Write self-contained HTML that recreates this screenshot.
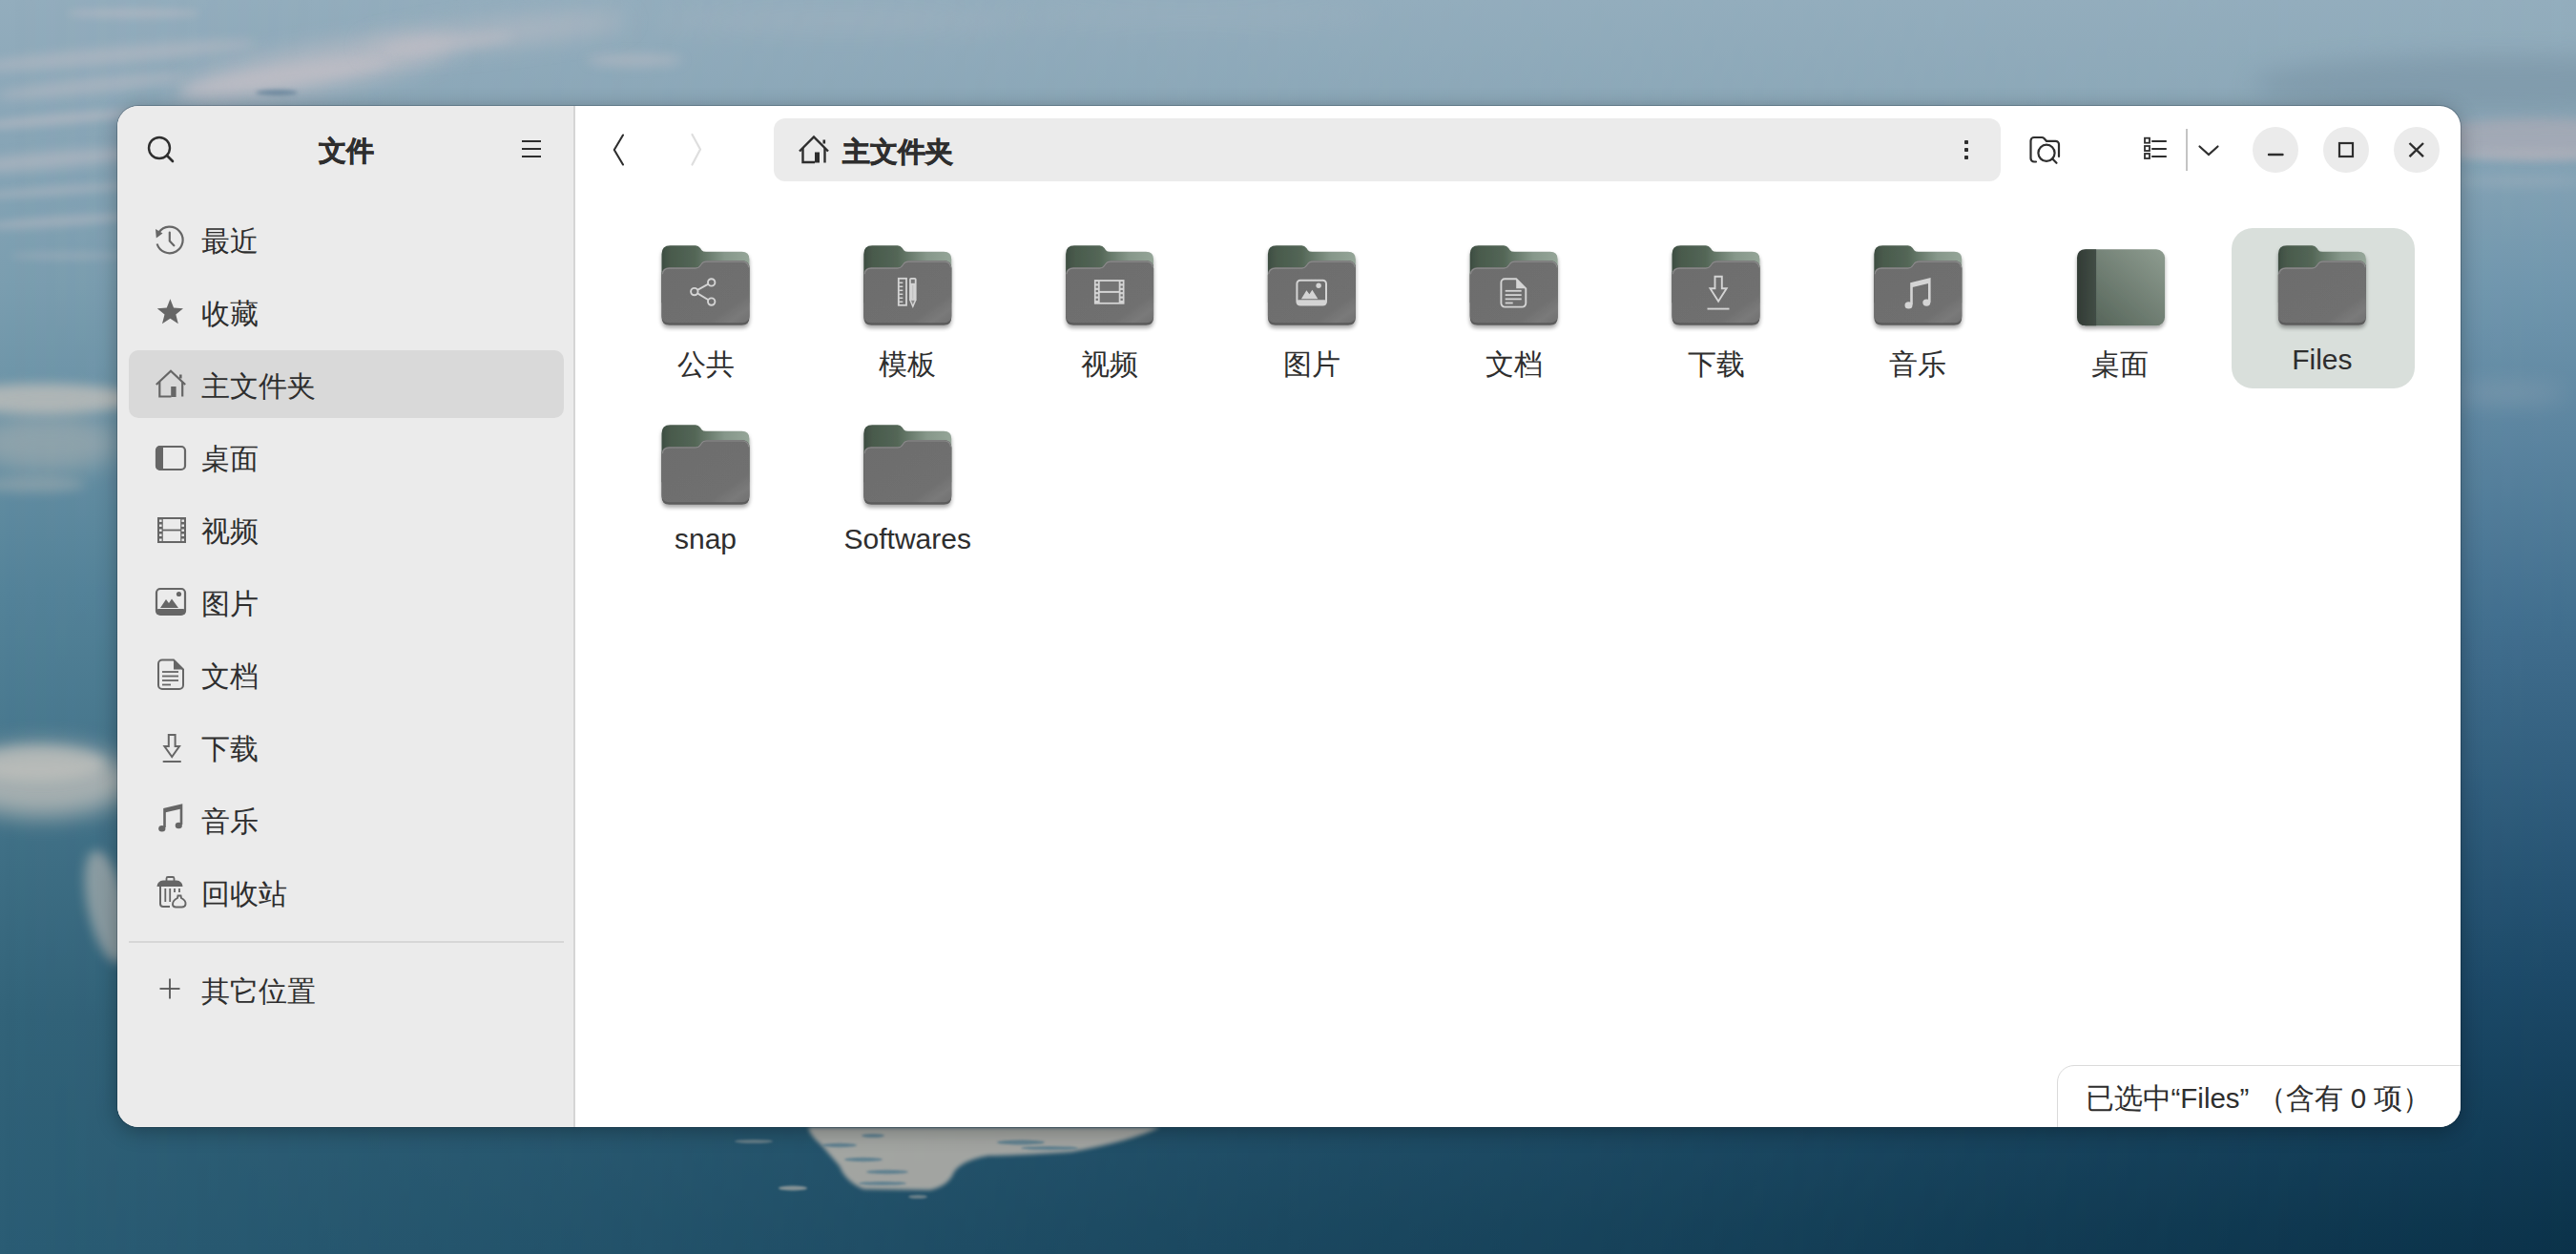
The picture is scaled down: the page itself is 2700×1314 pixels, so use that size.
<!DOCTYPE html>
<html><head><meta charset="utf-8">
<style>
html,body{margin:0;padding:0;}
body{width:2700px;height:1314px;position:relative;overflow:hidden;font-family:"Liberation Sans",sans-serif;color:#2e2e2e;background:#3f7a98;}
.abs{position:absolute;}
#win{position:absolute;left:123px;top:111px;width:2456px;height:1070px;border-radius:22px;overflow:hidden;background:#fff;
 box-shadow:0 0 0 1px rgba(0,20,35,0.22),0 4px 22px rgba(0,0,0,0.3);}
#side{position:absolute;left:0;top:0;width:478px;height:1070px;background:#ebebeb;}
#sep{position:absolute;left:478px;top:0;width:2px;height:1070px;background:#d5d5d5;}
.t{position:absolute;font-size:30px;line-height:40px;white-space:nowrap;color:#2e2e2e;}
.b{font-weight:bold;-webkit-text-stroke:0.6px #2e2e2e;}
svg{position:absolute;overflow:visible;}
</style></head>
<body>
<svg class="abs" style="left:0;top:0" width="2700" height="1314" viewBox="0 0 2700 1314">
<defs>
 <linearGradient id="bgv" x1="0" y1="0" x2="0" y2="1">
  <stop offset="0" stop-color="#93adbd"/><stop offset="0.085" stop-color="#8ba7b8"/><stop offset="0.23" stop-color="#7a9daf"/>
  <stop offset="0.47" stop-color="#548399"/><stop offset="0.81" stop-color="#326379"/><stop offset="1" stop-color="#2a5c74"/>
 </linearGradient>
 <linearGradient id="bgr" x1="0" y1="0" x2="0" y2="1">
  <stop offset="0" stop-color="#93adbd"/><stop offset="0.085" stop-color="#8ca8b8"/><stop offset="0.23" stop-color="#7096ad"/>
  <stop offset="0.49" stop-color="#426f8f"/><stop offset="0.78" stop-color="#1c4968"/><stop offset="0.975" stop-color="#0c344c"/><stop offset="1" stop-color="#0b324a"/>
 </linearGradient>
 <linearGradient id="mh" x1="0" y1="0" x2="1" y2="0">
  <stop offset="0" stop-color="#fff" stop-opacity="0"/><stop offset="1" stop-color="#fff" stop-opacity="1"/>
 </linearGradient>
 <mask id="mhm" maskUnits="userSpaceOnUse" x="0" y="0" width="2700" height="1314"><rect width="2700" height="1314" fill="url(#mh)"/></mask>
 <filter id="bl12" x="-50%" y="-300%" width="200%" height="700%"><feGaussianBlur stdDeviation="12"/></filter><filter id="bl6" x="-50%" y="-300%" width="200%" height="700%"><feGaussianBlur stdDeviation="6"/></filter>
 <filter id="bl4" x="-50%" y="-200%" width="200%" height="500%"><feGaussianBlur stdDeviation="4"/></filter>
 <filter id="bl1" x="-50%" y="-300%" width="200%" height="700%"><feGaussianBlur stdDeviation="1"/></filter><filter id="bl2" x="-50%" y="-200%" width="200%" height="500%"><feGaussianBlur stdDeviation="2"/></filter>
</defs>
<rect width="2700" height="1314" fill="url(#bgv)"/>
<rect width="2700" height="1314" fill="url(#bgr)" mask="url(#mhm)"/>
<g fill="#c3bfc6">
 <ellipse cx="330" cy="72" rx="150" ry="22" transform="rotate(-10 330 72)" opacity="0.7" filter="url(#bl12)"/>
 <ellipse cx="300" cy="80" rx="110" ry="10" transform="rotate(-8 300 80)" opacity="0.55" filter="url(#bl6)"/>
 <ellipse cx="520" cy="35" rx="140" ry="13" transform="rotate(-6 520 35)" opacity="0.55" filter="url(#bl12)"/>
 <ellipse cx="470" cy="45" rx="70" ry="7" transform="rotate(-6 470 45)" opacity="0.45" filter="url(#bl6)"/>
 <ellipse cx="120" cy="58" rx="150" ry="9" transform="rotate(-5 120 58)" opacity="0.45" filter="url(#bl6)"/>
 <ellipse cx="95" cy="90" rx="100" ry="8" transform="rotate(-6 95 90)" opacity="0.45" filter="url(#bl6)"/>
 <ellipse cx="140" cy="14" rx="70" ry="5" opacity="0.45" filter="url(#bl4)"/>
 <ellipse cx="665" cy="63" rx="50" ry="6" opacity="0.5" filter="url(#bl6)"/>
 <ellipse cx="880" cy="22" rx="200" ry="10" opacity="0.2" filter="url(#bl12)"/>
 <ellipse cx="1250" cy="18" rx="200" ry="10" opacity="0.12" filter="url(#bl12)"/>
 <ellipse cx="60" cy="125" rx="85" ry="6" transform="rotate(-5 60 125)" opacity="0.5" filter="url(#bl4)"/>
 <ellipse cx="50" cy="168" rx="95" ry="9" transform="rotate(-5 50 168)" opacity="0.5" filter="url(#bl6)"/>
 <ellipse cx="55" cy="200" rx="80" ry="5" transform="rotate(-4 55 200)" opacity="0.4" filter="url(#bl4)"/>
 <ellipse cx="60" cy="232" rx="75" ry="6" transform="rotate(-4 60 232)" opacity="0.42" filter="url(#bl4)"/>
 <ellipse cx="70" cy="268" rx="60" ry="4" opacity="0.3" filter="url(#bl4)"/>
 <ellipse cx="45" cy="418" rx="100" ry="16" fill="#c4c1bc" opacity="0.75" filter="url(#bl6)"/>
 <ellipse cx="50" cy="465" rx="75" ry="30" fill="#bdbab5" opacity="0.45" filter="url(#bl12)"/>
 <ellipse cx="35" cy="508" rx="55" ry="8" fill="#c0bdb8" opacity="0.35" filter="url(#bl6)"/>
 <ellipse cx="45" cy="818" rx="95" ry="38" fill="#c6c3bd" opacity="0.75" filter="url(#bl12)"/>
 <ellipse cx="40" cy="800" rx="70" ry="18" fill="#cac7c1" opacity="0.5" filter="url(#bl6)"/>
 <ellipse cx="112" cy="950" rx="20" ry="60" transform="rotate(-12 112 950)" fill="#bfbcb7" opacity="0.6" filter="url(#bl6)"/>
 <ellipse cx="2660" cy="145" rx="120" ry="22" fill="#aeacb6" opacity="0.7" filter="url(#bl6)"/>
 <ellipse cx="2650" cy="162" rx="90" ry="5" fill="#b8b6be" opacity="0.5" filter="url(#bl4)"/>
 <ellipse cx="2640" cy="190" rx="70" ry="5" opacity="0.25" filter="url(#bl6)"/>
 <ellipse cx="2630" cy="412" rx="60" ry="9" opacity="0.25" filter="url(#bl12)"/>
</g>
<ellipse cx="290" cy="97" rx="22" ry="3" fill="#5a7c95" opacity="0.7" filter="url(#bl2)"/>
<ellipse cx="2620" cy="88" rx="260" ry="30" fill="#6a8395" opacity="0.35" filter="url(#bl12)"/>
<g fill="#b0aea8">
 <path d="M847 1181 L1216 1181 Q1185 1196 1123 1207 Q1060 1211 1036 1211 Q1008 1216 1000 1228 Q994 1243 975 1247 L905 1246 Q886 1238 880 1222 Q868 1208 860 1199 Q849 1190 847 1181 Z" opacity="0.9" filter="url(#bl2)"/>
 <ellipse cx="831" cy="1245" rx="15" ry="2.5" opacity="0.7" filter="url(#bl1)"/>
 <ellipse cx="962" cy="1254" rx="10" ry="2" opacity="0.5" filter="url(#bl1)"/>
 <ellipse cx="790" cy="1196" rx="20" ry="2" opacity="0.45" filter="url(#bl1)"/>
</g>
<g fill="#2f6683" opacity="0.55">
 <ellipse cx="880" cy="1200" rx="18" ry="2.2" filter="url(#bl1)"/>
 <ellipse cx="905" cy="1215" rx="20" ry="2.2" filter="url(#bl1)"/>
 <ellipse cx="930" cy="1228" rx="22" ry="2.2" filter="url(#bl1)"/>
 <ellipse cx="925" cy="1240" rx="25" ry="2" filter="url(#bl1)"/>
 <ellipse cx="1070" cy="1197" rx="25" ry="2.5" filter="url(#bl1)"/>
 <ellipse cx="1100" cy="1203" rx="30" ry="2" filter="url(#bl1)"/>
 <ellipse cx="915" cy="1190" rx="12" ry="2" filter="url(#bl1)"/>
</g>
</svg>
<div id="win">
 <div id="side"></div>
 <div id="sep"></div>
<div style="position:absolute;left:2033px;top:1005px;width:600px;height:200px;border:1.5px solid #dadada;border-top-left-radius:18px;background:#fff"></div>
</div>
<svg class="abs" style="left:150px;top:138px" width="40" height="40" viewBox="0 0 40 40">
 <circle cx="17" cy="17" r="11" fill="none" stroke="#2e2e2e" stroke-width="2.4"/>
 <line x1="25" y1="25" x2="31" y2="31" stroke="#2e2e2e" stroke-width="2.6" stroke-linecap="round"/></svg>
<div class="t b" style="left:334px;top:138px;font-size:29px">文件</div>
<svg class="abs" style="left:540px;top:140px" width="34" height="34" viewBox="0 0 34 34">
 <rect x="7" y="7" width="20" height="2" fill="#2e2e2e"/><rect x="7" y="15" width="20" height="2" fill="#2e2e2e"/><rect x="7" y="23" width="20" height="2" fill="#2e2e2e"/></svg>
<div class="abs" style="left:135px;top:367px;width:456px;height:71px;border-radius:10px;background:#d9d9d9"></div>
<div class="abs" style="left:135px;top:986px;width:456px;height:2px;background:#d6d6d6"></div>
<div class="t" style="left:211px;top:233.0px">最近</div>
<div class="t" style="left:211px;top:309.0px">收藏</div>
<div class="t" style="left:211px;top:385.0px">主文件夹</div>
<div class="t" style="left:211px;top:461.0px">桌面</div>
<div class="t" style="left:211px;top:537.0px">视频</div>
<div class="t" style="left:211px;top:613.0px">图片</div>
<div class="t" style="left:211px;top:689.0px">文档</div>
<div class="t" style="left:211px;top:765.0px">下载</div>
<div class="t" style="left:211px;top:841.0px">音乐</div>
<div class="t" style="left:211px;top:917.0px">回收站</div>
<div class="t" style="left:211px;top:1018.5px">其它位置</div>
<svg class="abs" style="left:0;top:0" width="2700" height="1314" viewBox="0 0 2700 1314">
<g fill="none" stroke="#666666" stroke-width="2.2">
 <!-- clock -->
 <path d="M166.5 243.5 A13.8 13.8 0 1 1 164.6 255.5"/>
 <path d="M177.8 243.5 V252.5 L182.3 257.3" stroke-linecap="round" stroke-linejoin="round"/>
</g>
<path d="M163 240 L170.5 244.5 L163.8 249.5 Z" fill="#666666"/>
<polygon points="178.40,313.30 182.04,322.58 192.00,323.18 184.30,329.52 186.81,339.17 178.40,333.80 169.99,339.17 172.50,329.52 164.80,323.18 174.76,322.58" fill="#666666"/>
<!-- home -->
<g fill="none" stroke="#666666" stroke-width="2.2" stroke-linejoin="miter">
 <path d="M163.8 403 L179 388.8 L194.2 403"/>
 <path d="M167.3 400 V415.5 H179.5 M191.2 400 V415.5"/>
</g>
<rect x="179.2" y="405" width="5.4" height="11" fill="#666666"/>
<rect x="188" y="392.5" width="2.6" height="4" fill="#666666"/>
<!-- desktop -->
<rect x="164" y="468" width="30" height="24" rx="4" fill="none" stroke="#666666" stroke-width="2.2"/>
<path d="M168 467 H171 V493 H168 A5 5 0 0 1 163 488 V472 A5 5 0 0 1 168 467 Z" fill="#666666"/>
<!-- video -->
<rect x="165" y="542" width="30" height="27" fill="#666666"/>
<rect x="170.8" y="544" width="18.4" height="10.6" fill="#ebebeb"/><rect x="170.8" y="556.4" width="18.4" height="10.6" fill="#ebebeb"/>
<g fill="#ebebeb">
 <rect x="167" y="544.5" width="2.6" height="2.4"/><rect x="167" y="549.5" width="2.6" height="2.4"/><rect x="167" y="554.5" width="2.6" height="2.4"/><rect x="167" y="559.5" width="2.6" height="2.4"/><rect x="167" y="564.5" width="2.6" height="2.4"/>
 <rect x="190.4" y="544.5" width="2.6" height="2.4"/><rect x="190.4" y="549.5" width="2.6" height="2.4"/><rect x="190.4" y="554.5" width="2.6" height="2.4"/><rect x="190.4" y="559.5" width="2.6" height="2.4"/><rect x="190.4" y="564.5" width="2.6" height="2.4"/>
</g>
<!-- picture -->
<rect x="164" y="617" width="30" height="27" rx="4" fill="none" stroke="#666666" stroke-width="2.2"/>
<rect x="164" y="638" width="30" height="6" rx="2" fill="#666666"/>
<path d="M168 637 L174 628 L177 632 L180 627.5 L187 637 Z" fill="#666666"/>
<circle cx="187.5" cy="622.5" r="2.6" fill="#666666"/>
<!-- document -->
<path d="M170 691.5 H182 L192 701.5 V718 A4 4 0 0 1 188 722 H170 A4 4 0 0 1 166 718 V695.5 A4 4 0 0 1 170 691.5 Z" fill="none" stroke="#666666" stroke-width="2"/>
<path d="M182 691.5 L192 701.5 H182 Z" fill="#666666"/>
<g stroke="#666666" stroke-width="1.8"><line x1="170" y1="704" x2="187" y2="704"/><line x1="170" y1="708.5" x2="187" y2="708.5"/><line x1="170" y1="713" x2="187" y2="713"/><line x1="170" y1="717.5" x2="179" y2="717.5"/></g>
<!-- download -->
<path d="M176.8 770 H183.6 V782 H188 L180.2 793 L172.4 782 H176.8 Z" fill="none" stroke="#666666" stroke-width="2" stroke-linejoin="miter"/>
<line x1="171.5" y1="798" x2="189" y2="798" stroke="#666666" stroke-width="2" stroke-linecap="round"/>
<!-- music -->
<path d="M172.5 867 V848 L190 844 V864" fill="none" stroke="#666666" stroke-width="2.6"/>
<path d="M172.5 848 L190 844 V847.5 L172.5 851.5 Z" fill="#666666"/>
<ellipse cx="169.8" cy="868.3" rx="3.6" ry="3.3" fill="#666666"/>
<ellipse cx="187.3" cy="865" rx="3.6" ry="3.3" fill="#666666"/>
<!-- trash -->
<path d="M174.5 923 V920.5 Q174.5 919 176 919 H181 Q182.5 919 182.5 920.5 V923" fill="none" stroke="#666666" stroke-width="1.8"/>
<path d="M164.5 929 Q165 923 171 922.5 H185 Q191 923 191.5 929 Z" fill="#666666"/>
<path d="M168 929 V947 A3 3 0 0 0 171 950 H178" fill="none" stroke="#666666" stroke-width="2"/>
<line x1="173.3" y1="931" x2="173.3" y2="945" stroke="#666666" stroke-width="1.8"/>
<line x1="178.2" y1="931" x2="178.2" y2="945" stroke="#666666" stroke-width="1.8"/>
<line x1="183" y1="931" x2="183" y2="935" stroke="#666666" stroke-width="1.8"/>
<line x1="188" y1="931" x2="188" y2="935" stroke="#666666" stroke-width="1.8"/>
<path d="M186.5 938.5 H189.5 L190 941 Q195 943.5 194.5 947.5 Q194 950.5 190.5 950.5 H184.5 Q181 950.5 181 947.5 Q181 943.5 186 941 Z" fill="none" stroke="#666666" stroke-width="1.9"/>
<!-- plus -->
<g stroke="#555" stroke-width="1.8"><line x1="167.5" y1="1036" x2="188.5" y2="1036"/><line x1="178" y1="1025.5" x2="178" y2="1046.5"/></g>
</svg>
<div class="abs" style="left:811px;top:123.5px;width:1286px;height:66.5px;border-radius:12px;background:#ebebeb"></div>
<div class="t b" style="left:883px;top:138.5px;font-size:28.8px">主文件夹</div>
<svg class="abs" style="left:0;top:0" width="2700" height="1314" viewBox="0 0 2700 1314">
<path d="M653 141.5 L643.8 157 L653 172.5" fill="none" stroke="#2e2e2e" stroke-width="2.1" stroke-linejoin="round" stroke-linecap="round"/>
<path d="M725.5 141 L734 156.5 L725.5 172.5" fill="none" stroke="#dedede" stroke-width="2.2" stroke-linejoin="round" stroke-linecap="round"/>
<!-- path home -->
<g fill="none" stroke="#2e2e2e" stroke-width="2.4">
 <path d="M838 158.5 L853 143.5 L868 158.5"/>
 <path d="M841.5 155 V170 H854 M864.5 155 V170.5"/>
</g>
<rect x="854" y="159.5" width="5" height="11" fill="#2e2e2e"/>
<rect x="862.5" y="146.5" width="2.6" height="4" fill="#2e2e2e"/>
<!-- kebab -->
<rect x="2059" y="147" width="4" height="4" rx="0.8" fill="#2e2e2e"/>
<rect x="2059" y="155" width="4" height="4" rx="0.8" fill="#2e2e2e"/>
<rect x="2059" y="163" width="4" height="4" rx="0.8" fill="#2e2e2e"/>
<!-- folder search -->
<g fill="none" stroke="#2e2e2e" stroke-width="2.2" stroke-linecap="round">
 <path d="M2134 169.5 H2132 A3.5 3.5 0 0 1 2128.5 166 V147.5 A3.5 3.5 0 0 1 2132 144 H2140 Q2141.5 144 2142.5 145 L2145 147.8 H2154.5 A3.5 3.5 0 0 1 2158 151.3 V164"/>
 <circle cx="2145" cy="160.3" r="8.6"/>
 <path d="M2151.3 166.5 L2155.5 170.8"/>
</g>
<!-- list -->
<g fill="none" stroke="#2e2e2e" stroke-width="1.8">
 <rect x="2248" y="144.7" width="5" height="5"/><rect x="2248" y="153" width="5" height="5"/><rect x="2248" y="161" width="5" height="5"/>
</g>
<g stroke="#2e2e2e" stroke-width="2.2" stroke-linecap="round">
 <line x1="2256" y1="148" x2="2270" y2="148"/><line x1="2256" y1="156" x2="2270" y2="156"/><line x1="2256" y1="164" x2="2270" y2="164"/>
</g>
<line x1="2292" y1="135" x2="2292" y2="179" stroke="#c4c4c4" stroke-width="2"/>
<path d="M2305.5 153.5 L2315 162 L2324.5 153.5" fill="none" stroke="#2e2e2e" stroke-width="2.2" stroke-linecap="round"/>
<!-- window buttons -->
<circle cx="2385" cy="157" r="24" fill="#ebebeb"/>
<circle cx="2459" cy="157" r="24" fill="#ebebeb"/>
<circle cx="2533" cy="157" r="24" fill="#ebebeb"/>
<line x1="2378" y1="162" x2="2392.5" y2="162" stroke="#2e2e2e" stroke-width="2.4" stroke-linecap="round"/>
<rect x="2452" y="150" width="14" height="14" fill="none" stroke="#2e2e2e" stroke-width="2.2"/>
<path d="M2525.5 150 L2540 164.2 M2540 150 L2525.5 164.2" stroke="#2e2e2e" stroke-width="2.4"/>
</svg>
<svg class="abs" style="left:0;top:0" width="0" height="0">
<defs>
 <linearGradient id="gback" x1="0" y1="0" x2="1" y2="0">
  <stop offset="0" stop-color="#3d4d41"/><stop offset="0.1" stop-color="#495a4c"/><stop offset="0.38" stop-color="#536656"/><stop offset="0.72" stop-color="#86978a"/><stop offset="1" stop-color="#95a598"/>
 </linearGradient>
 <linearGradient id="gfront" x1="0" y1="0" x2="1" y2="1">
  <stop offset="0" stop-color="#6d6d6d"/><stop offset="0.75" stop-color="#6f6f6f"/><stop offset="0.88" stop-color="#7a7a7a"/><stop offset="1" stop-color="#707070"/>
 </linearGradient>
 <linearGradient id="gdesk" x1="0" y1="1" x2="1" y2="0">
  <stop offset="0" stop-color="#505f54"/><stop offset="1" stop-color="#8e9c90"/>
 </linearGradient>
 <linearGradient id="gdstrip" x1="0" y1="0" x2="1" y2="0"><stop offset="0" stop-color="#323b35"/><stop offset="1" stop-color="#414d45"/></linearGradient>
 <filter id="fsh" x="-20%" y="-20%" width="140%" height="150%">
  <feGaussianBlur in="SourceAlpha" stdDeviation="2"/><feOffset dy="2.5" result="b"/>
  <feComponentTransfer><feFuncA type="linear" slope="0.35"/></feComponentTransfer>
  <feMerge><feMergeNode/><feMergeNode in="SourceGraphic"/></feMerge>
 </filter>
 <symbol id="folder" viewBox="0 0 92 84" overflow="visible">
  <g filter="url(#fsh)">
  <path d="M0 9 Q0 0 9 0 H35.5 Q38.5 0 40.5 2.8 L42 5 Q43.3 6.5 46.5 6.5 H84 Q92 6.5 92 14.5 V60 H0 Z" fill="url(#gback)"/>
  <path d="M0 31 Q0 23 8 23 H35.5 Q38.8 23 40.6 20.3 L41.6 18.8 Q43.3 16 46.8 16 H84 Q92 16 92 24 V75.5 Q92 83.5 84 83.5 H8 Q0 83.5 0 75.5 Z" fill="#5b5b5b"/>
  <path d="M0 31 Q0 23 8 23 H35.5 Q38.8 23 40.6 20.3 L41.6 18.8 Q43.3 16 46.8 16 H84 Q92 16 92 24 V73.5 Q92 81 84 81 H8 Q0 81 0 73.5 Z" fill="url(#gfront)"/>
  <path d="M0.8 30 Q1.5 23.8 8 23.8 H35.5 Q38.8 23.8 40.6 21 L41.6 19.5 Q43.3 16.8 46.8 16.8 H84 Q91 16.8 91.2 23" fill="none" stroke="#8c8c8c" stroke-width="1.1"/>
  </g>
 </symbol>
</defs></svg>
<div class="abs" style="left:2339px;top:239px;width:191.5px;height:168px;border-radius:22px;background:#d9dfdb"></div>
<svg class="abs" style="left:0;top:0" width="2700" height="1314" viewBox="0 0 2700 1314">
<use href="#folder" x="693.5" y="257.3" width="92" height="84"/>
<use href="#folder" x="905.3" y="257.3" width="92" height="84"/>
<use href="#folder" x="1117.1" y="257.3" width="92" height="84"/>
<use href="#folder" x="1328.9" y="257.3" width="92" height="84"/>
<use href="#folder" x="1540.7" y="257.3" width="92" height="84"/>
<use href="#folder" x="1752.5" y="257.3" width="92" height="84"/>
<use href="#folder" x="1964.3" y="257.3" width="92" height="84"/>
<g transform="translate(2176.1,257.3)" filter="url(#fsh)">
 <rect x="1" y="4" width="92" height="80" rx="9" fill="url(#gdesk)"/>
 <path d="M10 4 H21 V84 H10 Q1 84 1 75 V13 Q1 4 10 4 Z" fill="url(#gdstrip)"/>
</g>
<use href="#folder" x="2387.9" y="257.3" width="92" height="84"/>
<use href="#folder" x="693.5" y="445.2" width="92" height="84"/>
<use href="#folder" x="905.3" y="445.2" width="92" height="84"/>
<g transform="translate(693.5,257.3)" fill="none" stroke="#d4d4d4" stroke-width="1.9">
 <circle cx="52.2" cy="38.6" r="3.7"/><circle cx="34.3" cy="48.3" r="3.7"/><circle cx="52.2" cy="58.8" r="3.7"/>
 <line x1="37.6" y1="46.5" x2="48.9" y2="40.4"/><line x1="37.6" y1="50.1" x2="48.9" y2="57"/>
</g>
<g transform="translate(905.3,257.3)">
 <rect x="36.5" y="34.5" width="8.2" height="28" fill="none" stroke="#d4d4d4" stroke-width="1.8"/>
 <g stroke="#d4d4d4" stroke-width="1.5"><line x1="37" y1="39" x2="41" y2="39"/><line x1="37" y1="43" x2="41" y2="43"/><line x1="37" y1="47" x2="41" y2="47"/><line x1="37" y1="51" x2="41" y2="51"/><line x1="37" y1="55" x2="41" y2="55"/><line x1="37" y1="59" x2="41" y2="59"/></g>
 <path d="M47.8 35.5 Q47.8 33.7 49.6 33.7 H53.5 Q55.3 33.7 55.3 35.5 V57 L51.5 65.7 L47.8 57 Z" fill="#d4d4d4"/>
 <rect x="49.5" y="35.5" width="4" height="4" fill="#777"/>
 <line x1="51.5" y1="41.5" x2="51.5" y2="56" stroke="#bdbdbd" stroke-width="1"/>
 <path d="M49.6 57.5 H53.4 L51.5 62 Z" fill="#8a8a8a"/>
</g>
<g transform="translate(1117.1,257.3)">
 <rect x="29.8" y="35.8" width="31.6" height="25.6" fill="#d4d4d4"/>
 <rect x="35.6" y="37.6" width="20" height="10" fill="#747474"/><rect x="35.6" y="49.6" width="20" height="10" fill="#747474"/>
 <g fill="#747474"><rect x="31.5" y="37.8" width="2.3" height="2.2"/><rect x="31.5" y="42.2" width="2.3" height="2.2"/><rect x="31.5" y="46.6" width="2.3" height="2.2"/><rect x="31.5" y="51" width="2.3" height="2.2"/><rect x="31.5" y="55.4" width="2.3" height="2.2"/>
 <rect x="57.4" y="37.8" width="2.3" height="2.2"/><rect x="57.4" y="42.2" width="2.3" height="2.2"/><rect x="57.4" y="46.6" width="2.3" height="2.2"/><rect x="57.4" y="51" width="2.3" height="2.2"/><rect x="57.4" y="55.4" width="2.3" height="2.2"/></g>
</g>
<g transform="translate(1328.9,257.3)">
 <rect x="30.5" y="36.5" width="30.6" height="25.8" rx="3.5" fill="none" stroke="#d4d4d4" stroke-width="2"/>
 <rect x="30.5" y="57" width="30.6" height="5.3" rx="1.5" fill="#d4d4d4"/>
 <path d="M35 56 L40.5 47 L43.5 51 L46.5 46.5 L52.5 56 Z" fill="#d4d4d4"/>
 <circle cx="53.2" cy="42" r="2.7" fill="#d4d4d4"/>
</g>
<g transform="translate(1540.7,257.3)">
 <path d="M36.5 35 H48.5 L58.6 45 V60.5 A3.8 3.8 0 0 1 54.8 64.3 H36.5 A3.8 3.8 0 0 1 32.7 60.5 V38.8 A3.8 3.8 0 0 1 36.5 35 Z" fill="none" stroke="#d4d4d4" stroke-width="1.9"/>
 <path d="M48.5 35 L58.6 45 H48.5 Z" fill="#d4d4d4"/>
 <g stroke="#d4d4d4" stroke-width="1.8"><line x1="37" y1="47.5" x2="54" y2="47.5"/><line x1="37" y1="51.8" x2="54" y2="51.8"/><line x1="37" y1="56.1" x2="54" y2="56.1"/><line x1="37" y1="60.2" x2="45" y2="60.2"/></g>
</g>
<g transform="translate(1752.5,257.3)">
 <path d="M45 32.5 H52.3 V45 H57.2 L48.6 58.5 L40 45 H45 Z" fill="none" stroke="#d4d4d4" stroke-width="1.9" stroke-linejoin="miter"/>
 <line x1="37" y1="66.3" x2="60" y2="66.3" stroke="#d4d4d4" stroke-width="1.9"/>
</g>
<g transform="translate(1964.3,257.3)">
 <path d="M39.2 62 V40 L58 35.3 V59.5" fill="none" stroke="#d4d4d4" stroke-width="2.6"/>
 <path d="M39.2 40 L58 35.3 V39.5 L39.2 44 Z" fill="#d4d4d4"/>
 <ellipse cx="36.2" cy="62.6" rx="4" ry="3.6" fill="#d4d4d4"/>
 <ellipse cx="55" cy="59.8" rx="4" ry="3.6" fill="#d4d4d4"/>
</g>
</svg>
<div class="t" style="left:639.5px;top:362.3px;width:200px;text-align:center">公共</div>
<div class="t" style="left:851.3px;top:362.3px;width:200px;text-align:center">模板</div>
<div class="t" style="left:1063.1px;top:362.3px;width:200px;text-align:center">视频</div>
<div class="t" style="left:1274.9px;top:362.3px;width:200px;text-align:center">图片</div>
<div class="t" style="left:1486.7px;top:362.3px;width:200px;text-align:center">文档</div>
<div class="t" style="left:1698.5px;top:362.3px;width:200px;text-align:center">下载</div>
<div class="t" style="left:1910.3px;top:362.3px;width:200px;text-align:center">音乐</div>
<div class="t" style="left:2122.1px;top:362.3px;width:200px;text-align:center">桌面</div>
<div class="t" style="left:2333.9px;top:357.3px;width:200px;text-align:center">Files</div>
<div class="t" style="left:639.5px;top:545.3px;width:200px;text-align:center">snap</div>
<div class="t" style="left:851.3px;top:545.3px;width:200px;text-align:center">Softwares</div>
<div class="t" style="left:2185.5px;top:1131px;font-size:29.5px">已选中“Files” （含有 0 项）</div>
</body></html>
